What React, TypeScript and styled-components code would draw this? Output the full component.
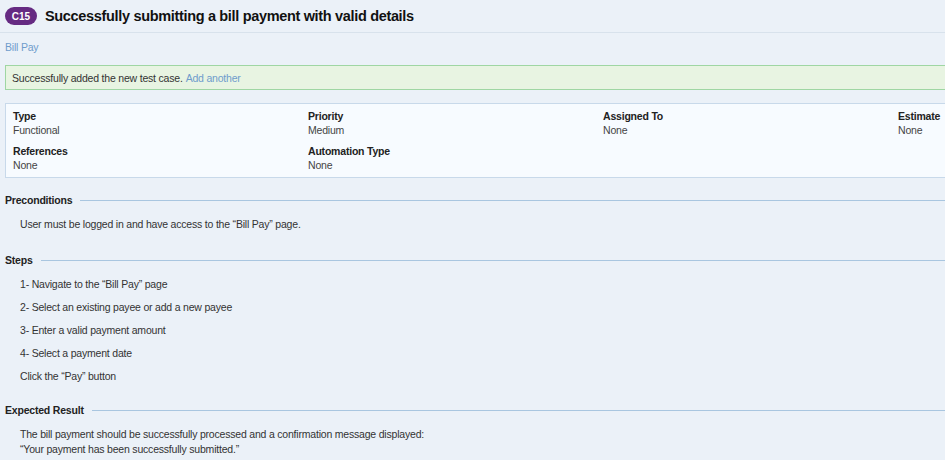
import styled, { createGlobalStyle } from 'styled-components';

const GlobalStyle = createGlobalStyle`
  html, body {
    margin: 0;
    padding: 0;
    background: #ebf1f8;
    overflow: hidden;
  }
  body {
    font-family: "Liberation Sans", Arial, sans-serif;
    color: #333;
  }
`;

const Page = styled.div`
  width: 1200px;
  background: #ebf1f8;
  min-height: 460px;
`;

const TitleBar = styled.div`
  display: flex;
  align-items: center;
  gap: 8px;
  height: 32px;
  padding: 0 5px;
  border-bottom: 1px solid #d8e2ec;
`;

const Badge = styled.span`
  display: inline-flex;
  align-items: center;
  justify-content: center;
  width: 32px;
  height: 18px;
  border-radius: 9px;
  background: #652a82;
  color: #fff;
  font-size: 10px;
  font-weight: bold;
`;

const Title = styled.h1`
  margin: 0;
  font-size: 14.5px;
  font-weight: bold;
  letter-spacing: -0.33px;
  color: #111;
`;

const Crumb = styled.a`
  display: block;
  margin: 8px 5px 0;
  font-size: 10.5px;
  letter-spacing: -0.2px;
  color: #6f9ccc;
  text-decoration: none;
`;

const Message = styled.div`
  margin: 12px 0 0 5px;
  height: 23px;
  display: flex;
  align-items: center;
  padding: 0 6px;
  background: #e8f4e2;
  border: 1px solid #9fd6a3;
  border-right: none;
  font-size: 10.5px;
  letter-spacing: -0.2px;
  color: #333;
`;

const Link = styled.a`
  margin-left: 3px;
  color: #6f9ccc;
  text-decoration: none;
`;

const InfoBox = styled.div`
  margin: 13px 0 0 5px;
  padding: 5px 0 5px 7px;
  background: #f7fbff;
  border: 1px solid #c8d9ea;
  border-right: none;
  display: grid;
  grid-template-columns: repeat(4, 295px);
  row-gap: 7px;
`;

const Field = styled.div`
  font-size: 10.5px;
  line-height: 14px;
  letter-spacing: -0.2px;
`;

const FieldLabel = styled.div`
  font-weight: bold;
  color: #222;
`;

const FieldValue = styled.div`
  color: #444;
`;

const Section = styled.section<{ $space: number }>`
  margin-top: ${(p) => p.$space}px;
  padding: 0 5px;
`;

const SectionHead = styled.div`
  display: flex;
  align-items: center;
  gap: 8px;
  font-size: 10.5px;
  font-weight: bold;
  letter-spacing: -0.2px;
  color: #222;
  &::after {
    content: '';
    flex: 1;
    height: 1px;
    background: #a9c6e0;
  }
`;

const Body = styled.div`
  padding: 11px 0 0 15px;
  font-size: 10.5px;
  letter-spacing: -0.2px;
  color: #333;
  line-height: 15px;
`;

const Step = styled.div`
  line-height: 15px;
  margin-bottom: 8px;
`;

const fields = [
  ['Type', 'Functional'],
  ['Priority', 'Medium'],
  ['Assigned To', 'None'],
  ['Estimate', 'None'],
  ['References', 'None'],
  ['Automation Type', 'None'],
];

const steps = [
  '1- Navigate to the \u201cBill Pay\u201d page',
  '2- Select an existing payee or add a new payee',
  '3- Enter a valid payment amount',
  '4- Select a payment date',
  'Click the \u201cPay\u201d button',
];

const App = () => {
  return (
    <Page>
      <GlobalStyle />
      <TitleBar>
        <Badge>C15</Badge>
        <Title>Successfully submitting a bill payment with valid details</Title>
      </TitleBar>
      <Crumb href="#">Bill Pay</Crumb>
      <Message>
        Successfully added the new test case.<Link href="#">Add another</Link>
      </Message>
      <InfoBox>
        {fields.map(([label, value]) => (
          <Field key={label}>
            <FieldLabel>{label}</FieldLabel>
            <FieldValue>{value}</FieldValue>
          </Field>
        ))}
      </InfoBox>
      <Section $space={16}>
        <SectionHead>Preconditions</SectionHead>
        <Body>User must be logged in and have access to the &ldquo;Bill Pay&rdquo; page.</Body>
      </Section>
      <Section $space={22}>
        <SectionHead>Steps</SectionHead>
        <Body>
          {steps.map((s) => (
            <Step key={s}>{s}</Step>
          ))}
        </Body>
      </Section>
      <Section $space={20}>
        <SectionHead>Expected Result</SectionHead>
        <Body>
          The bill payment should be successfully processed and a confirmation message displayed:
          <br />
          &ldquo;Your payment has been successfully submitted.&rdquo;
        </Body>
      </Section>
    </Page>
  );
};

export default App;
